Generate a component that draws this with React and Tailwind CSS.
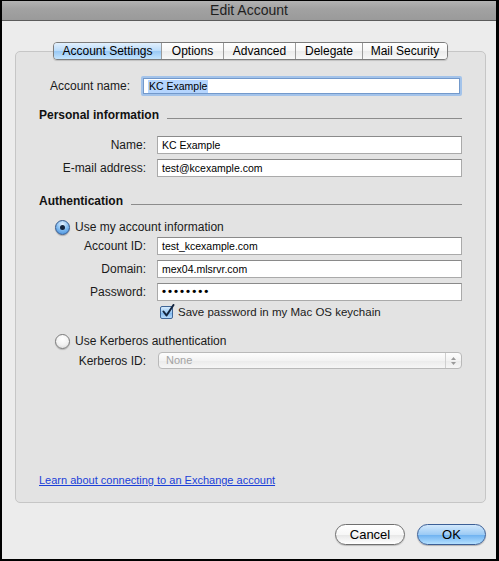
import React from 'react';

function TextField({ children, className = '' }) {
  return (
    <div className={`h-[18px] bg-white border border-[#aaaaaa] border-t-[#8a8a8a] flex items-center pl-[4px] text-[10.5px] text-black leading-none ${className}`}>
      {children}
    </div>
  );
}

function Row({ label, children, className = '' }) {
  return (
    <div className={`flex items-center ${className}`}>
      <div className="w-[107px] shrink-0 text-right text-[12px] leading-[14px] text-[#1a1a1a]">{label}</div>
      <div className="ml-[11px] flex-1">{children}</div>
    </div>
  );
}

function Heading({ title, className = '' }) {
  return (
    <div className={`flex items-end h-[14px] leading-[14px] ${className}`}>
      <span className="text-[12px] font-bold text-[#111]">{title}</span>
      <div className="flex-1 ml-[8px] mb-[3px] h-[1px] bg-[#8c8c8c]" />
    </div>
  );
}

function Radio({ checked }) {
  if (checked) {
    return (
      <div className="w-[15px] h-[15px] rounded-full border border-[#35598c] bg-[radial-gradient(circle_at_50%_25%,#e4f2ff,#79b6ee_55%,#3f86d6)] flex items-center justify-center shadow-[0_1px_1px_rgba(0,0,0,0.25)]">
        <div className="w-[5px] h-[5px] rounded-full bg-[#13243d]" />
      </div>
    );
  }
  return (
    <div className="w-[15px] h-[15px] rounded-full border border-[#7a7a7a] bg-[radial-gradient(circle_at_50%_30%,#ffffff,#f2f2f2_55%,#d2d2d2)] shadow-[0_1px_1px_rgba(0,0,0,0.2)]" />
  );
}

const tabs = [
  { name: 'Account Settings', w: 'w-[107px]', active: true },
  { name: 'Options', w: 'w-[62px]' },
  { name: 'Advanced', w: 'w-[72px]' },
  { name: 'Delegate', w: 'w-[67px]' },
  { name: 'Mail Security', w: 'w-[85px]' },
];

export default function App() {
  return (
    <div className="w-[499px] h-[561px] bg-black pt-[1px] pl-[2px] pr-[3px] pb-[2px] font-['Liberation_Sans',Arial,sans-serif]">
      <div className="h-full flex flex-col bg-[#ececec]">
        {/* title bar */}
        <div className="h-[20px] shrink-0 border-b border-[#5c5c5c] bg-[linear-gradient(#b3b3b3,#a2a2a2_40%,#9a9a9a)] flex items-center justify-center text-[14px] text-[#1e1e1e]">
          Edit Account
        </div>

        <div className="flex-1 flex flex-col pl-[13px] pr-[10px]">
          {/* segmented tabs */}
          <div className="pt-[21px] flex justify-center relative z-10">
            <div className="flex h-[18px] border border-[#7c7c7c] rounded-[4px] overflow-hidden shadow-[0_1px_1px_rgba(0,0,0,0.15)]">
              {tabs.map((t, i) => (
                <div
                  key={t.name}
                  className={`${t.w} flex items-center justify-center text-[12px] text-black ${i > 0 ? 'border-l border-[#9b9b9b]' : ''} ${t.active ? 'bg-[linear-gradient(#e2f0fd,#b9dbfa_50%,#98c8f4_51%,#c3e4fe)]' : 'bg-[linear-gradient(#ffffff,#f6f6f6_50%,#ebebeb_51%,#f8f8f8)]'}`}
                >
                  {t.name}
                </div>
              ))}
            </div>
          </div>

          {/* group box */}
          <div className="-mt-[9px] h-[452px] shrink-0 border border-[#c6c6c6] rounded-[5px] bg-[#e3e3e3] px-[23px] flex flex-col">
            <div className="flex items-center mt-[24px]">
              <div className="w-[91px] shrink-0 text-right text-[12px] leading-[14px] text-[#1a1a1a]">Account name:</div>
              <div className="ml-[11px] flex-1 h-[20px] border-2 border-[#a3c3ea] rounded-[2px] bg-white">
                <div className="h-full border border-[#7399cb] flex items-center pl-[4px]">
                  <span className="bg-[#b5d5fe] text-[10.5px] leading-[13px] text-black px-[1px]">KC Example</span>
                </div>
              </div>
            </div>

            <Heading title="Personal information" className="mt-[12px]" />
            <Row label="Name:" className="mt-[14px]"><TextField>KC Example</TextField></Row>
            <Row label="E-mail address:" className="mt-[5px]"><TextField>test@kcexample.com</TextField></Row>

            <Heading title="Authentication" className="mt-[17px]" />
            <div className="flex items-center h-[16px] mt-[11px] pl-[16px]">
              <Radio checked />
              <span className="ml-[5px] text-[12px] leading-[14px] text-[#1a1a1a]">Use my account information</span>
            </div>
            <Row label="Account ID:" className="mt-[2px]"><TextField>test_kcexample.com</TextField></Row>
            <Row label="Domain:" className="mt-[5px]"><TextField>mex04.mlsrvr.com</TextField></Row>
            <Row label="Password:" className="mt-[5px]">
              <TextField><span className="text-[11.5px] tracking-[2px] font-bold">••••••••</span></TextField>
            </Row>
            <div className="flex items-center h-[14px] mt-[4px] pl-[121px]">
              <div className="relative w-[13px] h-[13px] rounded-[2px] border border-[#3f6597] bg-[linear-gradient(#d6ebfd,#9ccaf4_50%,#79b4ee_51%,#b9dcfb)]">
                <svg className="absolute -top-[3px] left-[1px]" width="13" height="14" viewBox="0 0 13 14">
                  <path d="M1.5 7.5 L4.5 11.5 L11.5 1" fill="none" stroke="#14253f" strokeWidth="2" strokeLinecap="round" strokeLinejoin="round" />
                </svg>
              </div>
              <span className="ml-[5px] text-[11.5px] leading-[14px] text-[#1a1a1a]">Save password in my Mac OS keychain</span>
            </div>

            <div className="flex items-center h-[16px] mt-[14px] pl-[16px]">
              <Radio />
              <span className="ml-[5px] text-[12px] leading-[14px] text-[#1a1a1a]">Use Kerberos authentication</span>
            </div>
            <div className="flex items-center mt-[3px]">
              <div className="w-[107px] shrink-0 text-right text-[12px] leading-[14px] text-[#1a1a1a]">Kerberos ID:</div>
              <div className="ml-[12px] flex-1 h-[17px] rounded-[4px] border border-[#b9b9b9] bg-[linear-gradient(#fdfdfd,#f3f3f3_50%,#ebebeb_51%,#f6f6f6)] flex items-center">
                <span className="flex-1 pl-[7px] text-[11px] text-[#a3a3a3]">None</span>
                <div className="w-[16px] h-full border-l border-[#cfcfcf] flex flex-col items-center justify-center gap-[2px]">
                  <svg width="5" height="3" viewBox="0 0 5 3"><path d="M0 3 L2.5 0 L5 3 Z" fill="#9a9a9a" /></svg>
                  <svg width="5" height="3" viewBox="0 0 5 3"><path d="M0 0 L2.5 3 L5 0 Z" fill="#9a9a9a" /></svg>
                </div>
              </div>
            </div>

            <div className="mt-auto mb-[15px] text-[11px] leading-[13px]">
              <span className="text-[#1a3fd8] underline">Learn about connecting to an Exchange account</span>
            </div>
          </div>

          {/* buttons */}
          <div className="mt-[21px] flex justify-end gap-[12px]">
            <div className="w-[70px] h-[21px] rounded-full border border-[#6f6f6f] bg-[linear-gradient(#ffffff,#f7f7f7_50%,#e6e6e6_51%,#ffffff)] flex items-center justify-center text-[13px] text-black shadow-[0_1px_1px_rgba(0,0,0,0.2)]">
              Cancel
            </div>
            <div className="w-[69px] h-[21px] rounded-full border border-[#3c5f96] bg-[linear-gradient(#d2e8fc,#9ccbf5_50%,#6cb0f0_51%,#b4e0ff)] flex items-center justify-center text-[13px] text-black shadow-[0_1px_1px_rgba(0,0,0,0.25)]">
              OK
            </div>
          </div>
        </div>
      </div>
    </div>
  );
}
